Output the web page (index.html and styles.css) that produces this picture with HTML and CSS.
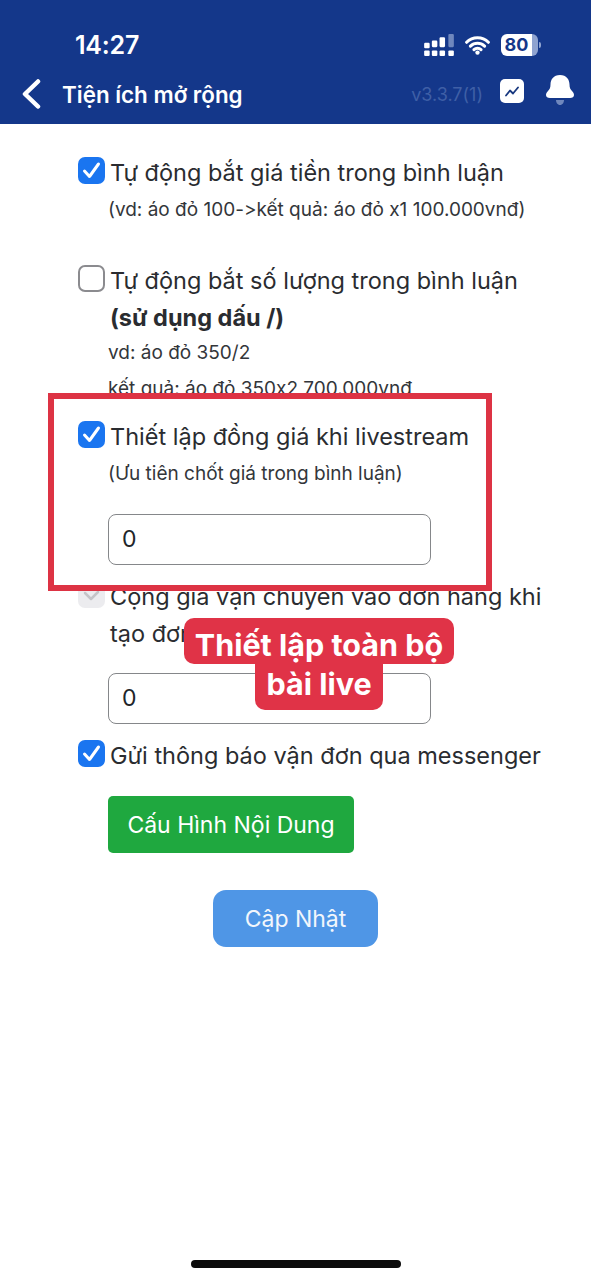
FILE: index.html
```html
<!DOCTYPE html>
<html lang="vi">
<head>
<meta charset="utf-8">
<title>Tiện ích mở rộng</title>
<link rel="stylesheet" href="styles.css">
</head>
<body>
<div class="page">
  <header class="header">
    <div class="status">
      <span class="time">14:27</span>
      <div class="status-icons">
        <svg class="signal" width="30" height="22" viewBox="0 0 27 20"><g fill="#fff"><rect x="0" y="8" width="5" height="5" rx="1"/><rect x="0" y="15" width="5" height="5" rx="1"/><rect x="7" y="6" width="5" height="6" rx="1"/><rect x="7" y="15" width="5" height="5" rx="1"/><rect x="14" y="3" width="5" height="9" rx="1"/><rect x="14" y="15" width="5" height="5" rx="1"/><rect x="22" y="15" width="5" height="5" rx="1"/></g><rect x="22" y="0" width="5" height="12" rx="1" fill="#6f87bd"/></svg>
        <svg class="wifi" width="25" height="20" viewBox="0 0 23 18"><path d="M1.500 6.500a14 14 0 0 1 20 0M5 10a9.500 9.500 0 0 1 13 0M8.300 13.300a4.500 4.500 0 0 1 6.400 0" fill="none" stroke="#fff" stroke-width="2.800" stroke-linecap="round"/><circle cx="11.500" cy="16" r="2" fill="#fff"/></svg>
        <div class="battery"><span class="battery-level">80</span><span class="battery-rest"></span></div>
      </div>
    </div>
    <div class="nav">
      <svg class="back" width="20" height="30" viewBox="0 0 20 30"><path d="M17 2.500 4 15l13 12.500" fill="none" stroke="#fff" stroke-width="4.500" stroke-linecap="round" stroke-linejoin="round"/></svg>
      <span class="nav-title">Tiện ích mở rộng</span>
      <span class="version">v3.3.7(1)</span>
      <div class="chart"><svg width="14" height="11" viewBox="0 0 14 11"><path d="M1 9.500 5 4.500l3 3L13 1.500" fill="none" stroke="#17377f" stroke-width="1.800" stroke-linejoin="round" stroke-linecap="round"/></svg></div>
      <svg class="bell" width="28" height="33" viewBox="0 0 28 33"><path d="M14 1C7.500 1 4.500 5.500 4.500 10.500c0 3.500-1 5-2.500 6.500C.3 18.800 0 20 0 21c0 2 1.500 3 4 3h20c2.500 0 4-1 4-3 0-1-.3-2.200-2-4-1.500-1.500-2.500-3-2.500-6.500C23.500 5.500 20.500 1 14 1Z" fill="#fff"/><path d="M10 26h8c0 2.500-1.500 5-4 5s-4-2.500-4-5Z" fill="#6f87bd"/></svg>
    </div>
  </header>

  <main class="content">
    <section class="item first">
      <label class="check-row"><span class="box checked"><svg viewBox="0 0 27 27"><path d="M6.500 14l5 5.500L20.500 7" /></svg></span><span class="label">Tự động bắt giá tiền trong bình luận</span></label>
      <p class="note note-first">(vd: áo đỏ 100-&gt;kết quả: áo đỏ x1 100.000vnđ)</p>
    </section>

    <section class="item second">
      <label class="check-row"><span class="box"></span><span class="label">Tự động bắt số lượng trong bình luận <b>(sử dụng dấu /)</b></span></label>
      <p class="note note-vd">vd: áo đỏ 350/2</p>
      <p class="note note-result">kết quả: áo đỏ 350x2 700.000vnđ</p>
    </section>

    <section class="item highlight">
      <label class="check-row"><span class="box checked"><svg viewBox="0 0 27 27"><path d="M6.500 14l5 5.500L20.500 7" /></svg></span><span class="label">Thiết lập đồng giá khi livestream</span></label>
      <p class="note note-first">(Ưu tiên chốt giá trong bình luận)</p>
      <div class="field field-top">0</div>
    </section>

    <section class="item shipping">
      <label class="check-row"><span class="box disabled"><svg viewBox="0 0 27 27"><path d="M7 12l6 6 7-7" /></svg></span><span class="label">Cộng giá vận chuyển vào đơn hàng khi tạo đơn</span></label>
      <div class="field field-ship">0</div>
      <div class="tag"><span class="tag-line tag-top">Thiết lập toàn bộ</span><span class="tag-line tag-bottom">bài live</span></div>
    </section>

    <section class="item messenger">
      <label class="check-row"><span class="box checked"><svg viewBox="0 0 27 27"><path d="M6.500 14l5 5.500L20.500 7" /></svg></span><span class="label">Gửi thông báo vận đơn qua messenger</span></label>
      <button class="btn-config" type="button">Cấu Hình Nội Dung</button>
    </section>

    <div class="submit-wrap"><button class="btn-submit" type="button">Cập Nhật</button></div>
  </main>

  <div class="home-wrap"><div class="home"></div></div>
</div>
</body>
</html>
```

FILE: styles.css
```css
* { box-sizing: border-box; }
html, body { margin: 0; padding: 0; }
body { width: 591px; height: 1280px; overflow: hidden; background: #fff; font-family: Inter, "Liberation Sans", sans-serif; color: #212529; font-variant-ligatures: none; font-feature-settings: "calt" 0, "liga" 0; }
.page { display: flex; flex-direction: column; height: 1280px; }

.header { height: 124px; background: #14378a; color: #fff; padding: 30px 0 0; flex: none; }
.status { display: flex; align-items: center; justify-content: space-between; height: 29px; padding: 0 53px 0 75px; }
.time { font-size: 25px; font-weight: 600; letter-spacing: -.2px; }
.status-icons { display: flex; align-items: center; }
.signal { margin-right: 11px; }
.wifi { margin-right: 11px; }
.battery { position: relative; display: flex; width: 37px; height: 22px; font-size: 18px; font-weight: 700; line-height: 22px; color: #14378a; }
.battery::after { content: ""; position: absolute; right: -3px; top: 8px; width: 2px; height: 6px; border-radius: 0 2px 2px 0; background: #8fa3d0; }
.battery-level { width: 31px; background: #fff; text-align: center; border-radius: 6px 0 0 6px; }
.battery-rest { flex: 1; background: #8fa3d0; border-radius: 0 6px 6px 0; }
.nav { display: flex; align-items: center; height: 40px; margin-top: 15px; padding-left: 21px; }
.back { flex: none; }
.nav-title { margin-left: 21px; font-size: 22.400px; font-weight: 600; }
.version { margin-left: auto; font-size: 18px; color: #3f5fa6; }
.chart { display: flex; align-items: center; justify-content: center; width: 24px; height: 24px; margin: -6px 0 0 17px; background: #fff; border-radius: 5px; }
.bell { margin: -8px 17px 0 22px; }

.content { flex: 1; padding-left: 78px; position: relative; }
.item { display: block; }
.check-row { display: flex; align-items: flex-start; font-size: 23.500px; line-height: 37px; }
.box { flex: none; width: 27px; height: 27px; margin: 3px 5px 0 0; border-radius: 7px; border: 2.500px solid #8b8b8f; background: #fff; }
.box svg { display: block; width: 100%; height: 100%; fill: none; stroke: #fff; stroke-width: 3; stroke-linecap: round; stroke-linejoin: round; }
.box.checked { background: #1a75f0; border: 0; }
.box.disabled { background: #ececef; border: 0; }
.box.disabled svg { stroke: #c4c4c8; stroke-width: 2.500; }
.label { display: block; width: 445px; color: #2a2c30; }
.label b { font-weight: 700; }
.note { margin: 0 0 0 30px; font-size: 19px; color: #33363a; line-height: 30px; white-space: nowrap; }
.note-first { margin-top: 4px; }
.note-vd { margin-top: 2px; }
.note-result { margin-top: 6px; height: 22px; }

.first { padding-top: 30px; }
.second { margin-top: 37px; }

.highlight { position: relative; z-index: 2; width: 444px; height: 198px; margin: -3px 0 0 -30px; padding: 19px 0 0 24px; border: 6px solid #dd3344; background: #fff; }
.field { width: 323px; height: 51px; margin-left: 30px; padding-left: 13px; border: 1.500px solid #85878a; border-radius: 8px; background: #fff; font-size: 23px; line-height: 48px; color: #212529; }
.field-top { margin-top: 25px; }

.shipping { position: relative; margin-top: -13px; }
.field-ship { margin-top: 21px; }
.tag { position: absolute; z-index: 3; left: 0; top: 40px; width: 482px; display: flex; flex-direction: column; align-items: center; }
.tag-line { display: block; height: 46px; padding: 0 11px; background: #e03347; color: #fff; font-size: 30.500px; font-weight: 700; white-space: nowrap; }
.tag-top { line-height: 54px; border-radius: 10px; }
.tag-bottom { line-height: 40px; border-radius: 0 0 10px 10px; }

.messenger { margin-top: 13px; }
.btn-config { display: block; width: 246px; height: 57px; margin: 22px 0 0 30px; border: 0; border-radius: 5px; background: #1fa83f; color: #fff; font: 400 23px Inter, "Liberation Sans", sans-serif; }
.submit-wrap { width: 435px; margin-top: 37px; display: flex; justify-content: center; }
.btn-submit { width: 165px; height: 57px; border: 0; border-radius: 13px; background: #4f96e6; color: #f2f6fc; font: 400 23px Inter, "Liberation Sans", sans-serif; }

.home-wrap { flex: none; height: 20px; display: flex; justify-content: center; }
.home { width: 210px; height: 8px; background: #0b0b0b; border-radius: 4px; }
```
